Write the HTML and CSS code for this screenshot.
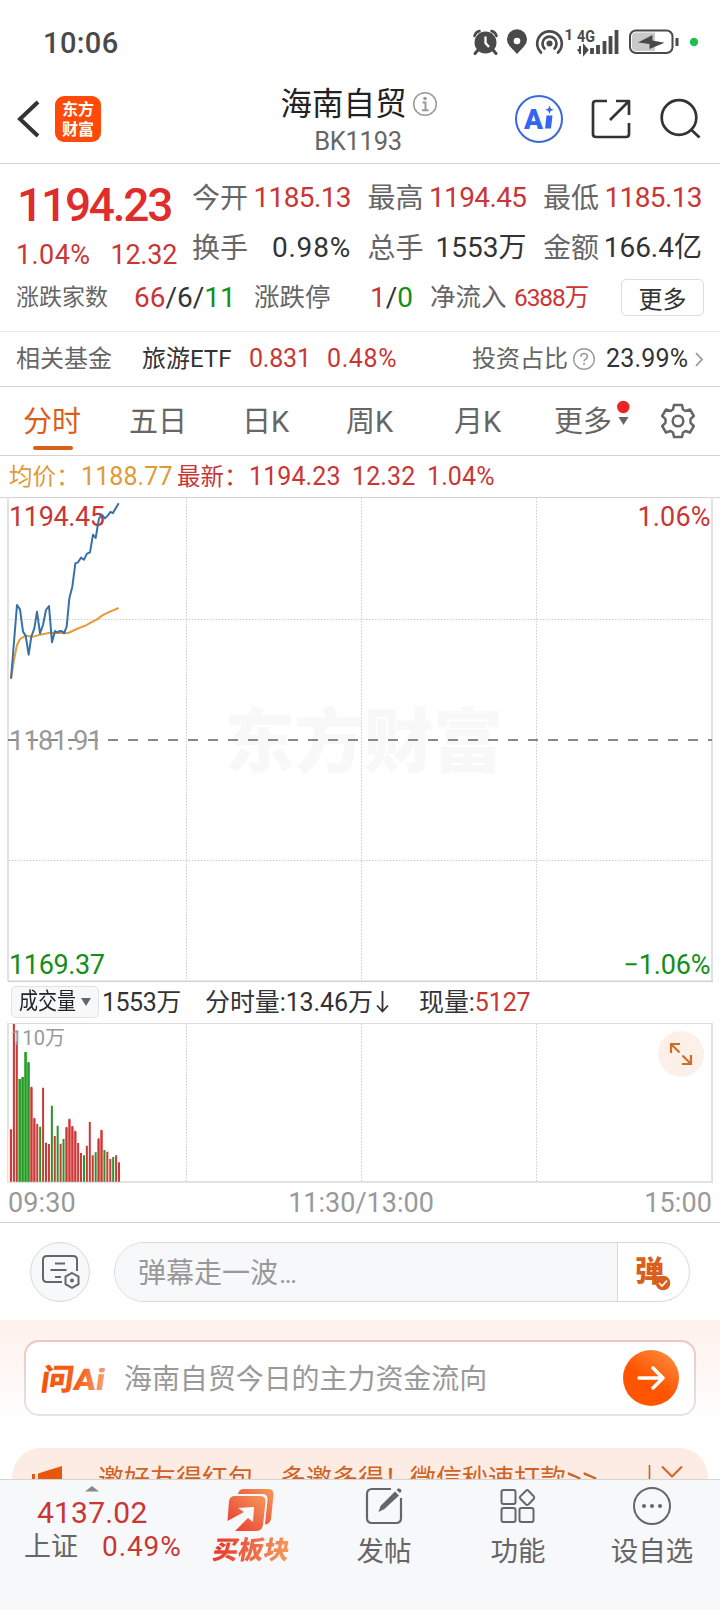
FILE: index.html
```html
<!DOCTYPE html>
<html lang="zh-CN">
<head>
<meta charset="utf-8">
<title>海南自贸 BK1193</title>
<link rel="stylesheet" href="styles.css">
</head>
<body>
<main class="page">
  <div class="status">
    <span class="clock">10:06</span>
    <svg class="status-icons" width="250" height="40" viewBox="470 22 250 40">
      <g fill="#4a4a4a" stroke="#4a4a4a">
        <circle cx="485.500" cy="42.500" r="11" stroke="none"/>
        <path d="M474.500 36q1-4 5-5M496.500 36q-1-4-5-5" fill="none" stroke-width="2.600" stroke-linecap="round"/>
        <path d="M478 50l-3 3.500M493 50l3 3.500" stroke-width="3" stroke-linecap="round"/>
        <path d="M485.500 36.500v6.500l3.500 4" fill="none" stroke="#fff" stroke-width="2.300"/>
        <path d="M517 54l-7-7.500a10 10 0 1 1 14 0z" stroke="none"/>
        <circle cx="517" cy="41" r="3.300" fill="#fff" stroke="none"/>
        <circle cx="549.500" cy="43.500" r="3" stroke="none"/>
        <path d="M544.500 48.500a7 7 0 1 1 10 0M541 52.500a12.300 12.300 0 1 1 17 0" fill="none" stroke-width="2.700" stroke-linecap="round"/>
        <path d="M592 48v6M598 45v9M604.500 41v13M610.500 36v18M616.500 30v24" stroke-width="3.800"/>
        <path d="M577.500 50h2.500v-4v8M584 46v8l3.500-4z" stroke-width="2"/>
      </g>
      <rect x="630" y="30.500" width="42.500" height="22.500" rx="6" fill="#fff" stroke="#4a4a4a" stroke-width="2"/>
      <path d="M655 32.500h-19a4 4 0 0 0-4 4V47a4 4 0 0 0 4 4h19z" fill="#c9c9c9"/>
      <path d="M638 42.500L652.500 35V40.500L664.500 42.700 649.500 49V44z" fill="#4a4a4a"/>
      <path d="M677 38v8" stroke="#4a4a4a" stroke-width="3"/>
      <circle cx="694" cy="42" r="4.200" fill="#1fbf56"/>
      <text x="564.500" y="40" class="net" font-size="15">1</text>
      <text x="577" y="42" class="net" font-size="17" textLength="18" lengthAdjust="spacingAndGlyphs">4G</text>
    </svg>
  </div>

  <header class="nav">
    <svg class="back" width="24" height="38" viewBox="0 0 24 38"><path d="M22 2L4 19l18 17" fill="none" stroke="#333" stroke-width="4"/></svg>
    <div class="logo"><span>东方</span><span>财富</span></div>
    <div class="title">
      <div class="title-name">海南自贸
        <svg width="26" height="26" viewBox="0 0 26 26"><circle cx="13" cy="13" r="11.300" fill="none" stroke="#999" stroke-width="1.500"/><circle cx="13" cy="7.500" r="1.800" fill="#999"/><path d="M10.500 11.500H13.500V19M10 19.300h6.500" fill="none" stroke="#999" stroke-width="1.900"/></svg>
      </div>
      <div class="title-code">BK1193</div>
    </div>
    <svg class="nav-icons" width="200" height="60" viewBox="510 89 200 60">
      <circle cx="539" cy="119" r="23" fill="none" stroke="#3c66dc" stroke-width="2"/>
      <text x="524" y="128.500" class="ai-mark" textLength="19" lengthAdjust="spacingAndGlyphs">A</text>
      <path d="M546.500 115.500h6l-1.500 13h-6z" fill="#3566ee"/>
      <path d="M549.500 105.500l1.200 2.900 2.900 1.300-2.900 1.300-1.200 2.900-1.200-2.900-2.900-1.300 2.900-1.300z" fill="#3566ee"/>
      <g fill="none" stroke="#333" stroke-width="2.700" stroke-linejoin="round">
        <path d="M607 101h-11q-3 0-3 3v30q0 3 3 3h30q3 0 3-3v-11M616 101h13v14M629 101l-19 19"/>
        <circle cx="679" cy="117.500" r="17.300"/><path d="M691 129.500l8.500 8"/>
      </g>
    </svg>
  </header>

  <section class="quote">
    <div class="quote-main">
      <div class="last">
        <div class="price">1194.23</div>
        <div class="change"><span>1.04%</span><span class="diff">12.32</span></div>
      </div>
      <div class="metrics">
        <div class="cell"><label>今开</label><b class="red">1185.13</b></div>
        <div class="cell"><label>最高</label><b class="red">1194.45</b></div>
        <div class="cell"><label>最低</label><b class="red">1185.13</b></div>
        <div class="cell"><label>换手</label><b class="wide">0.98%</b></div>
        <div class="cell"><label>总手</label><b class="flat">1553万</b></div>
        <div class="cell"><label>金额</label><b class="flat">166.4亿</b></div>
      </div>
    </div>
    <div class="quote-more">
      <label class="sm">涨跌家数</label>
      <b><i class="red">66</i>/6/<i class="green">11</i></b>
      <label>涨跌停</label>
      <b><i class="red">1</i>/<i class="green">0</i></b>
      <label>净流入</label>
      <b class="flow red">6388万</b>
      <button class="more">更多</button>
    </div>
  </section>

  <section class="fund">
    <span class="gray">相关基金</span>
    <span>旅游ETF</span>
    <span class="red fund-price">0.831</span>
    <span class="red fund-pct">0.48%</span>
    <span class="gray">投资占比</span>
    <svg width="24" height="24" viewBox="0 0 24 24"><circle cx="12" cy="12" r="10.300" fill="none" stroke="#999" stroke-width="1.400"/><path d="M8.800 9.800q0-3.300 3.300-3.300t3.300 3q0 1.800-2 2.700-1.300.6-1.300 2.300" fill="none" stroke="#999" stroke-width="1.600"/><circle cx="12.100" cy="17" r="1.100" fill="#999"/></svg>
    <span class="fund-ratio">23.99%</span>
    <svg width="12" height="20" viewBox="0 0 12 20"><path d="M2 4l6 6.500-6 6.500" fill="none" stroke="#999" stroke-width="1.800"/></svg>
  </section>

  <nav class="tabs">
    <span class="tab active">分时</span>
    <span class="tab">五日</span>
    <span class="tab">日K</span>
    <span class="tab">周K</span>
    <span class="tab">月K</span>
    <span class="tab">更多</span>
    <svg class="drop" width="18" height="68" viewBox="615 387 18 68"><circle cx="624.300" cy="407" r="6.200" fill="#ec2424"/><path d="M619.500 417h10l-5 8z" fill="#666"/></svg>
    <svg width="36" height="36" viewBox="-18 -18 36 36"><g fill="none" stroke="#666" stroke-width="2.500" stroke-linejoin="round"><path d="M-4-16H4L5-11.500 7.500-10 12-11.500 15.800-5 12.500-1.800V1.800L15.800 5 12 11.500 7.500 10 5 11.500 4 16H-4L-5 11.500-7.500 10-12 11.500-15.800 5-12.500 1.800V-1.800L-15.800-5-12-11.500-7.500-10-5-11.500z"/><circle r="5.300"/></g></svg>
  </nav>

  <div class="legend">
    <span class="amber">均价：</span><span class="amber">1188.77</span>
    <span>最新：</span><span>1194.23</span><span>12.32</span><span>1.04%</span>
  </div>

  <svg class="chart" width="720" height="485" viewBox="0 0 720 485">
    <text x="225" y="270" class="watermark" textLength="278">东方财富</text>
    <path d="M186.500 1V483M361.500 1V483M536.500 1V483M9 122.500H711M9 363.500H711" class="grid"/>
    <path d="M8 0V484M712 0V484" class="frame"/>
    <path d="M8 484.500H713" stroke="#d2d2d2" stroke-width="2"/>
    <path d="M8 243H712" stroke="#888" stroke-width="2" stroke-dasharray="10 10"/>
    <g class="axis">
      <text x="9" y="28.500" class="up" textLength="96">1194.45</text>
      <text x="710.500" y="28.500" class="up" text-anchor="end" textLength="73">1.06%</text>
      <text x="9" y="252.500" textLength="94">1181.91</text>
      <text x="9" y="477" class="down" textLength="96">1169.37</text>
      <text x="710.500" y="477" class="down" text-anchor="end" textLength="87">−1.06%</text>
    </g>
    <g transform="translate(0 -7) scale(.33333)" class="series">
      <path stroke="#e89a35" d="M33 566L42 510 51 465 60 447 77 437 100 440 120 434 150 428 205 429 230 417 258 406 270 399 290 389 306 377 325 367 356 354"/>
      <path stroke="#3771ab" d="M33 566L51 345 60 358 69 425 77 437 86 494 94 440 103 415 111 365 120 430 129 405 138 360 147 348 156 457 165 423 172 427 180 423 186 424 192 430 200 410 208 325 217 290 226 220 234 217 243 203 252 209 261 191 270 187 279 134 287 144 297 85 306 75 315 85 324 76 331 66 339 69 348 53 356 40"/>
    </g>
  </svg>

  <div class="volume-head">
    <span class="picker"><span class="picker-text">成交量</span><svg width="12" height="10" viewBox="0 0 12 10"><path d="M1 1h10l-5 8z" fill="#666"/></svg></span>
    <span class="total">1553万</span>
    <span>分时量:13.46万<svg class="down-arrow" width="20" height="26" viewBox="0 0 20 26"><path d="M9.500 2v20M4 16.500l5.500 6 5.500-6" fill="none" stroke="#333" stroke-width="1.800"/></svg></span>
    <span>现量:<i class="red">5127</i></span>
  </div>

  <svg class="volume" width="720" height="160" viewBox="0 0 720 160">
    <path d="M8 .5H713" stroke="#ddd"/>
    <path d="M186.500 1V158M361.500 1V158M536.500 1V158" class="grid"/>
    <path d="M8 0V159H712V0" class="frame"/>
    <g transform="translate(0 -53) scale(.33333)" fill="none">
      <path d="M24 637V478H37V162H46V215H54V637z" fill="#fdeaea"/>
      <path d="M59.300 635V327M68 635V321M76.800 635V246M85.500 635V277" stroke="#6fd06f" stroke-width="9"/>
      <path d="M94.300 635V355M103 635V448M199.500 635V475M208.300 635V450M217 635V472M225.800 635V486M295.800 635V509M304.600 635V483" stroke="#f5a0a0" stroke-width="9"/>
      <path stroke="#c93a38" stroke-width="6" d="M33 635V478M41.800 635V162M50.500 635V215M94.300 635V350M103 635V444M111.800 635V462M129.300 635V353M138 635V518M146.800 635V522M164.300 635V498M181.800 635V521M199.500 635V471M208.300 635V446M217 635V468M225.800 635V482M234.400 635V519M243 635V549M260.600 635V527M269.400 635V456M278.200 635V556M295.800 635V505M304.600 635V479M322 635V545M330.800 635V567M348.300 635V556M357 635V577"/>
      <path stroke="#279527" stroke-width="6" d="M59.300 635V327M68 635V321M76.800 635V246M85.500 635V277M120.500 635V470M155.600 635V407M173 635V467M190.600 635V507M252 635V556M287 635V547M313.300 635V540M339.500 635V561"/>
    </g>
    <text x="11" y="22" class="vol-max" textLength="54">110万</text>
    <circle cx="681" cy="31" r="23" fill="#fdf0e9"/>
    <path d="M671 30v-9h9M671.500 21.500l8 8M691 32v9h-9M690.500 40.500l-8-8" fill="none" stroke="#d26a28" stroke-width="2.200"/>
  </svg>

  <div class="times"><span>09:30</span><span class="noon">11:30/13:00</span><span>15:00</span></div>

  <div class="danmu">
    <span class="danmu-set"><svg width="40" height="36" viewBox="0 0 40 36"><g fill="none" stroke="#666" stroke-width="2"><path d="M37 17V6q0-4-4-4H7Q3 2 3 6V24q0 4 4 4H22M15 9.500H25M10.500 16H26.500M15 23H21"/><path d="M32 19l6.500 3.700v7.400L32 33.800l-6.500-3.700v-7.400z"/></g><circle cx="32" cy="26.500" r="2" fill="#666"/></svg></span>
    <div class="danmu-box">
      <span class="danmu-input">弹幕走一波<em>...</em></span>
      <span class="danmu-toggle">弹<svg width="16" height="16" viewBox="0 0 16 16"><circle cx="8" cy="8" r="7.300" fill="#d95f1c"/><path d="M4 8l3 3 5-5.500" fill="none" stroke="#fff" stroke-width="1.700"/></svg></span>
    </div>
  </div>

  <section class="ask">
    <div class="ask-card">
      <svg class="ask-logo" width="70" height="36" viewBox="0 0 70 36">
        <defs><linearGradient id="ask-fill" x1="0" x2="1"><stop offset="0" stop-color="#f4520c"/><stop offset=".6" stop-color="#f4641f"/><stop offset="1" stop-color="#f7a070"/></linearGradient></defs>
        <text x="6" y="30" textLength="64" lengthAdjust="spacingAndGlyphs" transform="skewX(-8)" fill="url(#ask-fill)">问Ai</text>
      </svg>
      <span class="ask-text">海南自贸今日的主力资金流向</span>
      <span class="ask-go"><svg width="32" height="28" viewBox="0 0 32 28"><path d="M4 14H28M18 4l10 10-10 10" fill="none" stroke="#fff" stroke-width="3.600" stroke-linecap="round" stroke-linejoin="round"/></svg></span>
    </div>
  </section>

  <div class="promo">
    <svg width="34" height="34" viewBox="0 0 34 34"><path d="M2 10h3v14H2zM8 9.500L32 2V32L8 24.500z" fill="#e8560c"/></svg>
    <span class="promo-text">邀好友得红包，多邀多得！微信秒速打款<span class="gt">&gt;&gt;</span></span>
    <svg width="40" height="34" viewBox="0 0 40 34"><path d="M6.500 1V31" stroke="#c8622a" stroke-width="1.600"/><path d="M19 2.500l10 10 10-10" fill="none" stroke="#cf6a33" stroke-width="2.200"/></svg>
  </div>
</main>

<footer class="dock">
  <div class="index">
    <svg width="14" height="6" viewBox="0 0 14 6"><path d="M0 5.500L7 0l7 5.500z" fill="#888"/></svg>
    <span class="index-value">4137.02</span>
    <span class="index-row"><span>上证</span><span class="red">0.49%</span></span>
  </div>
  <div class="item buy">
    <svg width="48" height="44" viewBox="0 0 48 44">
      <defs><linearGradient id="buy-a" x1="0" y1="1" x2="1" y2="0"><stop offset="0" stop-color="#e8352c"/><stop offset="1" stop-color="#f59a5c"/></linearGradient></defs>
      <path d="M11 6Q12 1 17 1H41Q47 1 46.500 7L44 31Q43 36 38 36.500L40.500 12Q41 6 35 6z" fill="url(#buy-a)"/>
      <path d="M2 13Q3 8 8 8H33Q39 8 38.500 14L36 37Q35 43 29 43H8L21 30 26 34 27 19 11 20 17 24 .5 33z" fill="url(#buy-a)"/>
    </svg>
    <span class="buy-text">买板块</span>
  </div>
  <div class="item">
    <svg width="40" height="40" viewBox="0 0 40 40"><g fill="none" stroke="#666" stroke-width="2.200"><path d="M27 3H8Q3 3 3 8V32Q3 37 8 37H32Q37 37 37 32V12"/></g><path d="M14.500 26l2-6L31 5.500l4 4L20.500 23z" fill="#666"/><path d="M32.500 4l2-1.800q3 .5 3 3l-1.500 1.800z" fill="#666"/></svg>
    <span>发帖</span>
  </div>
  <div class="item">
    <svg width="40" height="40" viewBox="0 0 40 40"><g fill="none" stroke="#666" stroke-width="2"><rect x="3.500" y="4" width="14" height="14" rx="2"/><rect x="3.500" y="22" width="14" height="14" rx="2"/><rect x="21.500" y="22" width="14" height="14" rx="2"/><path d="M28 4.700q1.200-1.200 2.400 0l5.400 5.700q1 1.200 0 2.400l-5.400 5.700q-1.200 1-2.400 0l-5.700-5.700q-1-1.200 0-2.400z"/></g></svg>
    <span>功能</span>
  </div>
  <div class="item">
    <svg width="40" height="40" viewBox="0 0 40 40"><circle cx="20" cy="20" r="18" fill="none" stroke="#666" stroke-width="2"/><g fill="#666"><circle cx="12" cy="20" r="2"/><circle cx="20" cy="20" r="2"/><circle cx="28" cy="20" r="2"/></g></svg>
    <span>设自选</span>
  </div>
</footer>
</body>
</html>
```
FILE: styles.css
```css
* { box-sizing: border-box; }
body {
  margin: 0;
  width: 720px;
  height: 1610px;
  overflow: hidden;
  background: #fff;
  color: #333;
  font-family: Roboto, "Noto Sans CJK SC", sans-serif;
}
svg { display: block; flex: none; }
b, i, em, label { font-weight: 400; font-style: normal; }
.red { color: #c93634; }
.green { color: #128f16; }
.gray { color: #666; }
.page { height: 1479px; overflow: hidden; display: flex; flex-direction: column; }
.page > * { flex: none; }

.status { height: 84px; padding: 22px 0 0 43px; display: flex; justify-content: space-between; }
.clock { font-size: 29px; font-weight: 500; line-height: 42px; letter-spacing: .4px; color: #4a4a4a; }
.net { font-weight: 700; fill: #4a4a4a; stroke: none; }

.nav {
  height: 80px;
  border-bottom: 1px solid #d4d4d4;
  padding-left: 17px;
  display: grid;
  grid-template-columns: 38px 46px 157px 200px 52px 200px;
}
.back { margin: 16px 0 0 -1px; }
.logo {
  grid-column: 2;
  margin-top: 12px;
  width: 46px; height: 46px;
  border-radius: 9px;
  background: #ff4a0a;
  color: #fff;
  font: 700 16px/19.500px "Noto Sans CJK SC", sans-serif;
  display: flex; flex-direction: column; align-items: center;
  padding-top: 3px;
}
.title { grid-column: 4; display: flex; flex-direction: column; align-items: center; }
.title-name { height: 38px; font-size: 31.5px; line-height: 38px; padding-top: 3px; color: #222; display: flex; align-items: center; gap: 5px; margin-left: 2px; }
.title-name svg { margin-top: -2px; }
.title-code { font-size: 25.500px; line-height: 38px; color: #666; letter-spacing: -.3px; }
.nav-icons { grid-column: 6; margin-top: 5px; justify-self: start; }
.ai-mark { font: 900 27px Roboto, sans-serif; fill: #3566ee; }

.quote { height: 168px; padding: 8px 0 0 16px; border-bottom: 1px solid #e8e8e8; }
.quote-main { display: grid; grid-template-columns: 176px 511px; }
.price { font-size: 46px; font-weight: 500; line-height: 66px; height: 64px; letter-spacing: -2.2px; color: #e02c2a; padding-left: 1px; }
.change { display: flex; font-size: 27px; line-height: 39px; height: 36px; color: #c93634; letter-spacing: .4px; }
.diff { margin-left: 20px; letter-spacing: -.2px; }
.metrics { display: grid; grid-template-columns: repeat(3, 159px); grid-template-rows: 50px 50px; column-gap: 16.500px; font-size: 28px; line-height: 52px; }
.metrics label, .quote-more label { color: #666; }
.metrics label { line-height: 54px; height: 50px; }
.cell { display: flex; justify-content: space-between; white-space: nowrap; }
.cell b { letter-spacing: -.6px; }
.cell .wide { letter-spacing: .8px; }
.cell .flat { letter-spacing: 0; }
.quote-more {
  display: grid;
  grid-template-columns: 118px 120px 116px 60px 84px 107px 83px;
  font-size: 28px; line-height: 51px; white-space: nowrap;
}
.quote-more label { font-size: 25.500px; }
.quote-more .sm { font-size: 23px; }
.quote-more .flow { font-size: 24.500px; letter-spacing: -1.1px; }
.more { height: 37px; margin-top: 7px; padding: 0; background: #fff; border: 1px solid #ddd; border-radius: 5px; font: 24px/31px "Noto Sans CJK SC", sans-serif; color: #333; }

.fund {
  height: 55px; padding-left: 16px; border-bottom: 1px solid #d4d4d4;
  display: grid; align-items: center;
  grid-template-columns: 126px 107px 78px 145px 100px 34px 88px 14px;
  font-size: 24px; line-height: 50px; white-space: nowrap;
}
.fund-price { font-size: 25px; letter-spacing: -.2px; }
.fund-pct { font-size: 25px; letter-spacing: .6px; }
.fund-ratio { font-size: 25px; letter-spacing: .2px; }

.tabs {
  height: 69px; padding-left: 23px; border-bottom: 1px solid #d4d4d4;
  display: grid; align-items: center;
  grid-template-columns: 106px 113px 104px 108px 100px 60px 46px 36px;
  font-size: 29px; line-height: 68px; color: #666; white-space: nowrap;
}
.tab { height: 68px; line-height: 71px; }
.active { color: #d9601a; position: relative; }
.active::after { content: ""; position: absolute; left: 10px; top: 59px; width: 40px; height: 4px; border-radius: 2px; background: #d9601a; }

.legend {
  height: 42px; padding-left: 9px; border-bottom: 1px solid #d4d4d4;
  display: grid; grid-template-columns: 72px 96px 72px 103px 75px 80px;
  font-size: 25px; line-height: 42px; color: #c93634; white-space: nowrap; letter-spacing: .1px;
}
.legend span:nth-child(odd):nth-child(-n+3) { font-size: 23.500px; }
.legend .amber { color: #e09a35; }

.chart { margin-top: -1px; }
.grid { fill: none; stroke: #ccc; stroke-width: 1; stroke-dasharray: 1.500 1.500; }
.frame { fill: none; stroke: #e2e2e2; stroke-width: 2; }
.series path { fill: none; stroke-width: 6; stroke-linejoin: round; }
.axis text { font-size: 27px; fill: #999; }
.axis .up { fill: #c93634; }
.axis .down { fill: #128f16; }
.watermark { font: 900 70px "Noto Sans CJK SC", sans-serif; fill: #f8f8f8; }

.volume-head {
  height: 41px; padding-left: 11px;
  display: grid; grid-template-columns: 91px 103px 214px 200px;
  font-size: 25px; line-height: 41px; white-space: nowrap; letter-spacing: -.1px;
}
.total { letter-spacing: -.5px; }
.picker { width: 88px; height: 32px; margin-top: 4px; padding: 0 6px 0 7px; background: #f6f8fa; border: 1px solid #e0e2e4; border-radius: 5px; display: flex; align-items: center; justify-content: space-between; }
.picker-text { width: 57px; font-size: 23px; line-height: 30px; letter-spacing: 0; transform: scaleX(.826); transform-origin: left; color: #222; }
.down-arrow { display: inline-block; vertical-align: -4px; }
.vol-max { font-size: 20px; fill: #999; }

.times { height: 40px; padding: 0 8px; border-bottom: 1px solid #d4d4d4; display: flex; justify-content: space-between; font-size: 27px; line-height: 41px; color: #999; letter-spacing: .1px; }
.noon { letter-spacing: 0; margin-left: 2px; }

.danmu { height: 97px; padding: 19px 0 0 30px; display: flex; gap: 24px; }
.danmu-set { width: 60px; height: 60px; border: 1px solid #d5d8dc; border-radius: 50%; background: #f7f8fa; display: flex; align-items: center; justify-content: center; }
.danmu-box { width: 576px; height: 60px; border: 1px solid #d5d8dc; border-radius: 30px; overflow: hidden; display: flex; }
.danmu-input { flex: 1; padding-left: 23px; background: #f7f8fa; border-right: 1px solid #d5d8dc; font-size: 28px; line-height: 61px; color: #999; }
.danmu-input em { letter-spacing: -1.900px; margin-left: 1px; }
.danmu-toggle { width: 71px; padding-left: 17px; font-size: 29px; font-weight: 900; line-height: 59px; color: #d95f1c; display: flex; }
.danmu-toggle svg { margin: 32px 0 0 -9px; }

.ask { height: 128px; padding: 20px 24px 0; background: linear-gradient(#fff1ec, #fff 105px); }
.ask-card {
  height: 76px; border: 2px solid transparent; border-radius: 15px;
  background: linear-gradient(#fff, #fff) padding-box, linear-gradient(#f3c4bc, #dfe5f0) border-box;
  display: grid; align-items: center; grid-template-columns: 86px 498px 56px; padding-left: 12px;
}
.ask-logo text { font-size: 30px; font-weight: 900; }
.ask-text { font-size: 27.950px; height: 72px; line-height: 75px; color: #999; }
.ask-go { width: 56px; height: 56px; margin-left: 1px; border-radius: 50%; background: linear-gradient(35deg, #ff5500 45%, #ff9348); display: flex; align-items: center; justify-content: center; }

.promo {
  height: 60px; margin: 0 12px; padding: 16px 0 0 18px; border-radius: 29px; background: #fdece3;
  display: grid; grid-template-columns: 68px 545px 40px; color: #cf6224;
}
.promo-text { font-size: 26px; line-height: 28px; white-space: nowrap; }
.gt { font-size: 30px; }

.dock { height: 131px; background: #f7f8fa; border-top: 1px solid #d2d4d6; display: grid; grid-template-columns: 185px 132px 134px 134px 134px; color: #666; }
.index { padding-top: 6px; color: #c93634; }
.index > svg { margin-left: 85px; }
.index-value { display: block; padding-left: 37px; font-size: 30px; line-height: 41px; letter-spacing: .2px; }
.index-row { display: flex; padding-left: 24px; font-size: 28px; line-height: 28px; letter-spacing: .9px; }
.index-row span:first-child { width: 78px; color: #666; font-size: 27px; letter-spacing: 0; }
.item { display: flex; flex-direction: column; align-items: center; padding-top: 6px; font-size: 27.500px; line-height: 51px; }
.buy { padding-top: 8px; }
.item.buy svg { margin-left: -1px; }
.buy-text { font-size: 25.500px; font-weight: 900; line-height: 36px; transform: skewX(-10deg); background: linear-gradient(90deg, #e8352c, #f59a5c); background-clip: text; -webkit-background-clip: text; color: transparent; }
```
